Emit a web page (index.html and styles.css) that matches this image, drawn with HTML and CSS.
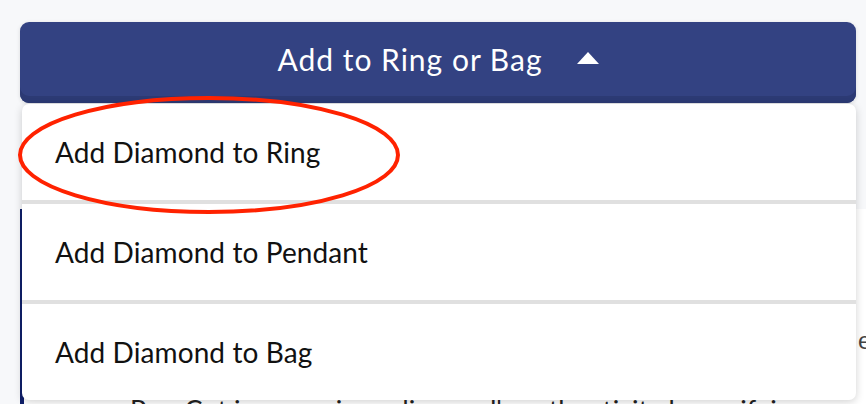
FILE: index.html
```html
<!DOCTYPE html>
<html>
<head>
<meta charset="utf-8">
<link rel="stylesheet" href="styles.css">
</head>
<body>
<div class="page">
  <button class="toggle">
    <span class="toggle-label">Add to Ring or Bag</span>
    <span class="caret"></span>
  </button>
  <div class="stage">
    <div class="card">
      <p class="side-text">e</p>
      <p class="card-text">PureCut is our unique diamond's authenticity by verifying</p>
    </div>
    <ul class="menu">
      <li class="menu-item">Add Diamond to Ring</li>
      <li class="menu-item">Add Diamond to Pendant</li>
      <li class="menu-item">Add Diamond to Bag</li>
    </ul>
  </div>
  <svg class="annotation" width="390" height="124" viewBox="0 0 390 124">
    <ellipse cx="195" cy="62" rx="189" ry="57" fill="none" stroke="#ff2200" stroke-width="4"/>
  </svg>
</div>
</body>
</html>
```

FILE: styles.css
```css
html, body {
  margin: 0;
  padding: 0;
  background: #f7f8fa;
  font-family: "Lato", "Noto Sans", sans-serif;
}
.page {
  position: relative;
  width: 866px;
  height: 404px;
  overflow: hidden;
  padding: 22px 10px 0 20px;
  box-sizing: border-box;
}
.toggle {
  display: flex;
  align-items: center;
  justify-content: center;
  gap: 34px;
  width: 836px;
  height: 81px;
  padding: 0 0 7px 0;
  box-sizing: border-box;
  border: none;
  border-radius: 9px;
  background: #334282;
  box-shadow: inset 0 -7px 0 #2c3a74, 0 1px 4px rgba(0,0,0,0.12);
  color: #fff;
  font-family: "Lato", "Noto Sans", sans-serif;
  font-size: 30px;
  font-weight: 400;
}
.toggle-label {
  letter-spacing: 1px;
}
.caret {
  width: 0;
  height: 0;
  border-left: 11px solid transparent;
  border-right: 11px solid transparent;
  border-bottom: 12px solid #fff;
  margin-top: -3px;
}
.stage {
  position: relative;
  display: flow-root;
  height: 301px;
}
.card {
  margin-top: 106px;
  height: 200px;
  background: #fff;
  border-left: 4px solid #0f1f6a;
  width: 900px;
  position: relative;
}
.side-text {
  margin: 0;
  position: absolute;
  left: 834px;
  top: 118px;
  font-family: "Liberation Sans", sans-serif;
  font-size: 24px;
  color: #444;
}
.card-text {
  margin: 0;
  position: absolute;
  left: 106px;
  top: 184px;
  font-family: "Lato", sans-serif;
  font-size: 27px;
  color: #222;
  white-space: nowrap;
}
.menu {
  position: absolute;
  top: 1px;
  left: 2px;
  width: 834px;
  margin: 0;
  padding: 0;
  list-style: none;
  background: #fff;
  border-radius: 7px;
  box-shadow: 0 2px 8px rgba(0,0,0,0.18);
  overflow: hidden;
}
.menu-item {
  height: 96px;
  display: flex;
  align-items: center;
  padding-left: 33px;
  font-size: 28px;
  letter-spacing: 0.1px;
  color: #111;
  border-top: 4px solid #e0e0e0;
}
.menu-item:first-child {
  border-top: none;
}
.annotation {
  position: absolute;
  left: 14px;
  top: 93px;
}
```
